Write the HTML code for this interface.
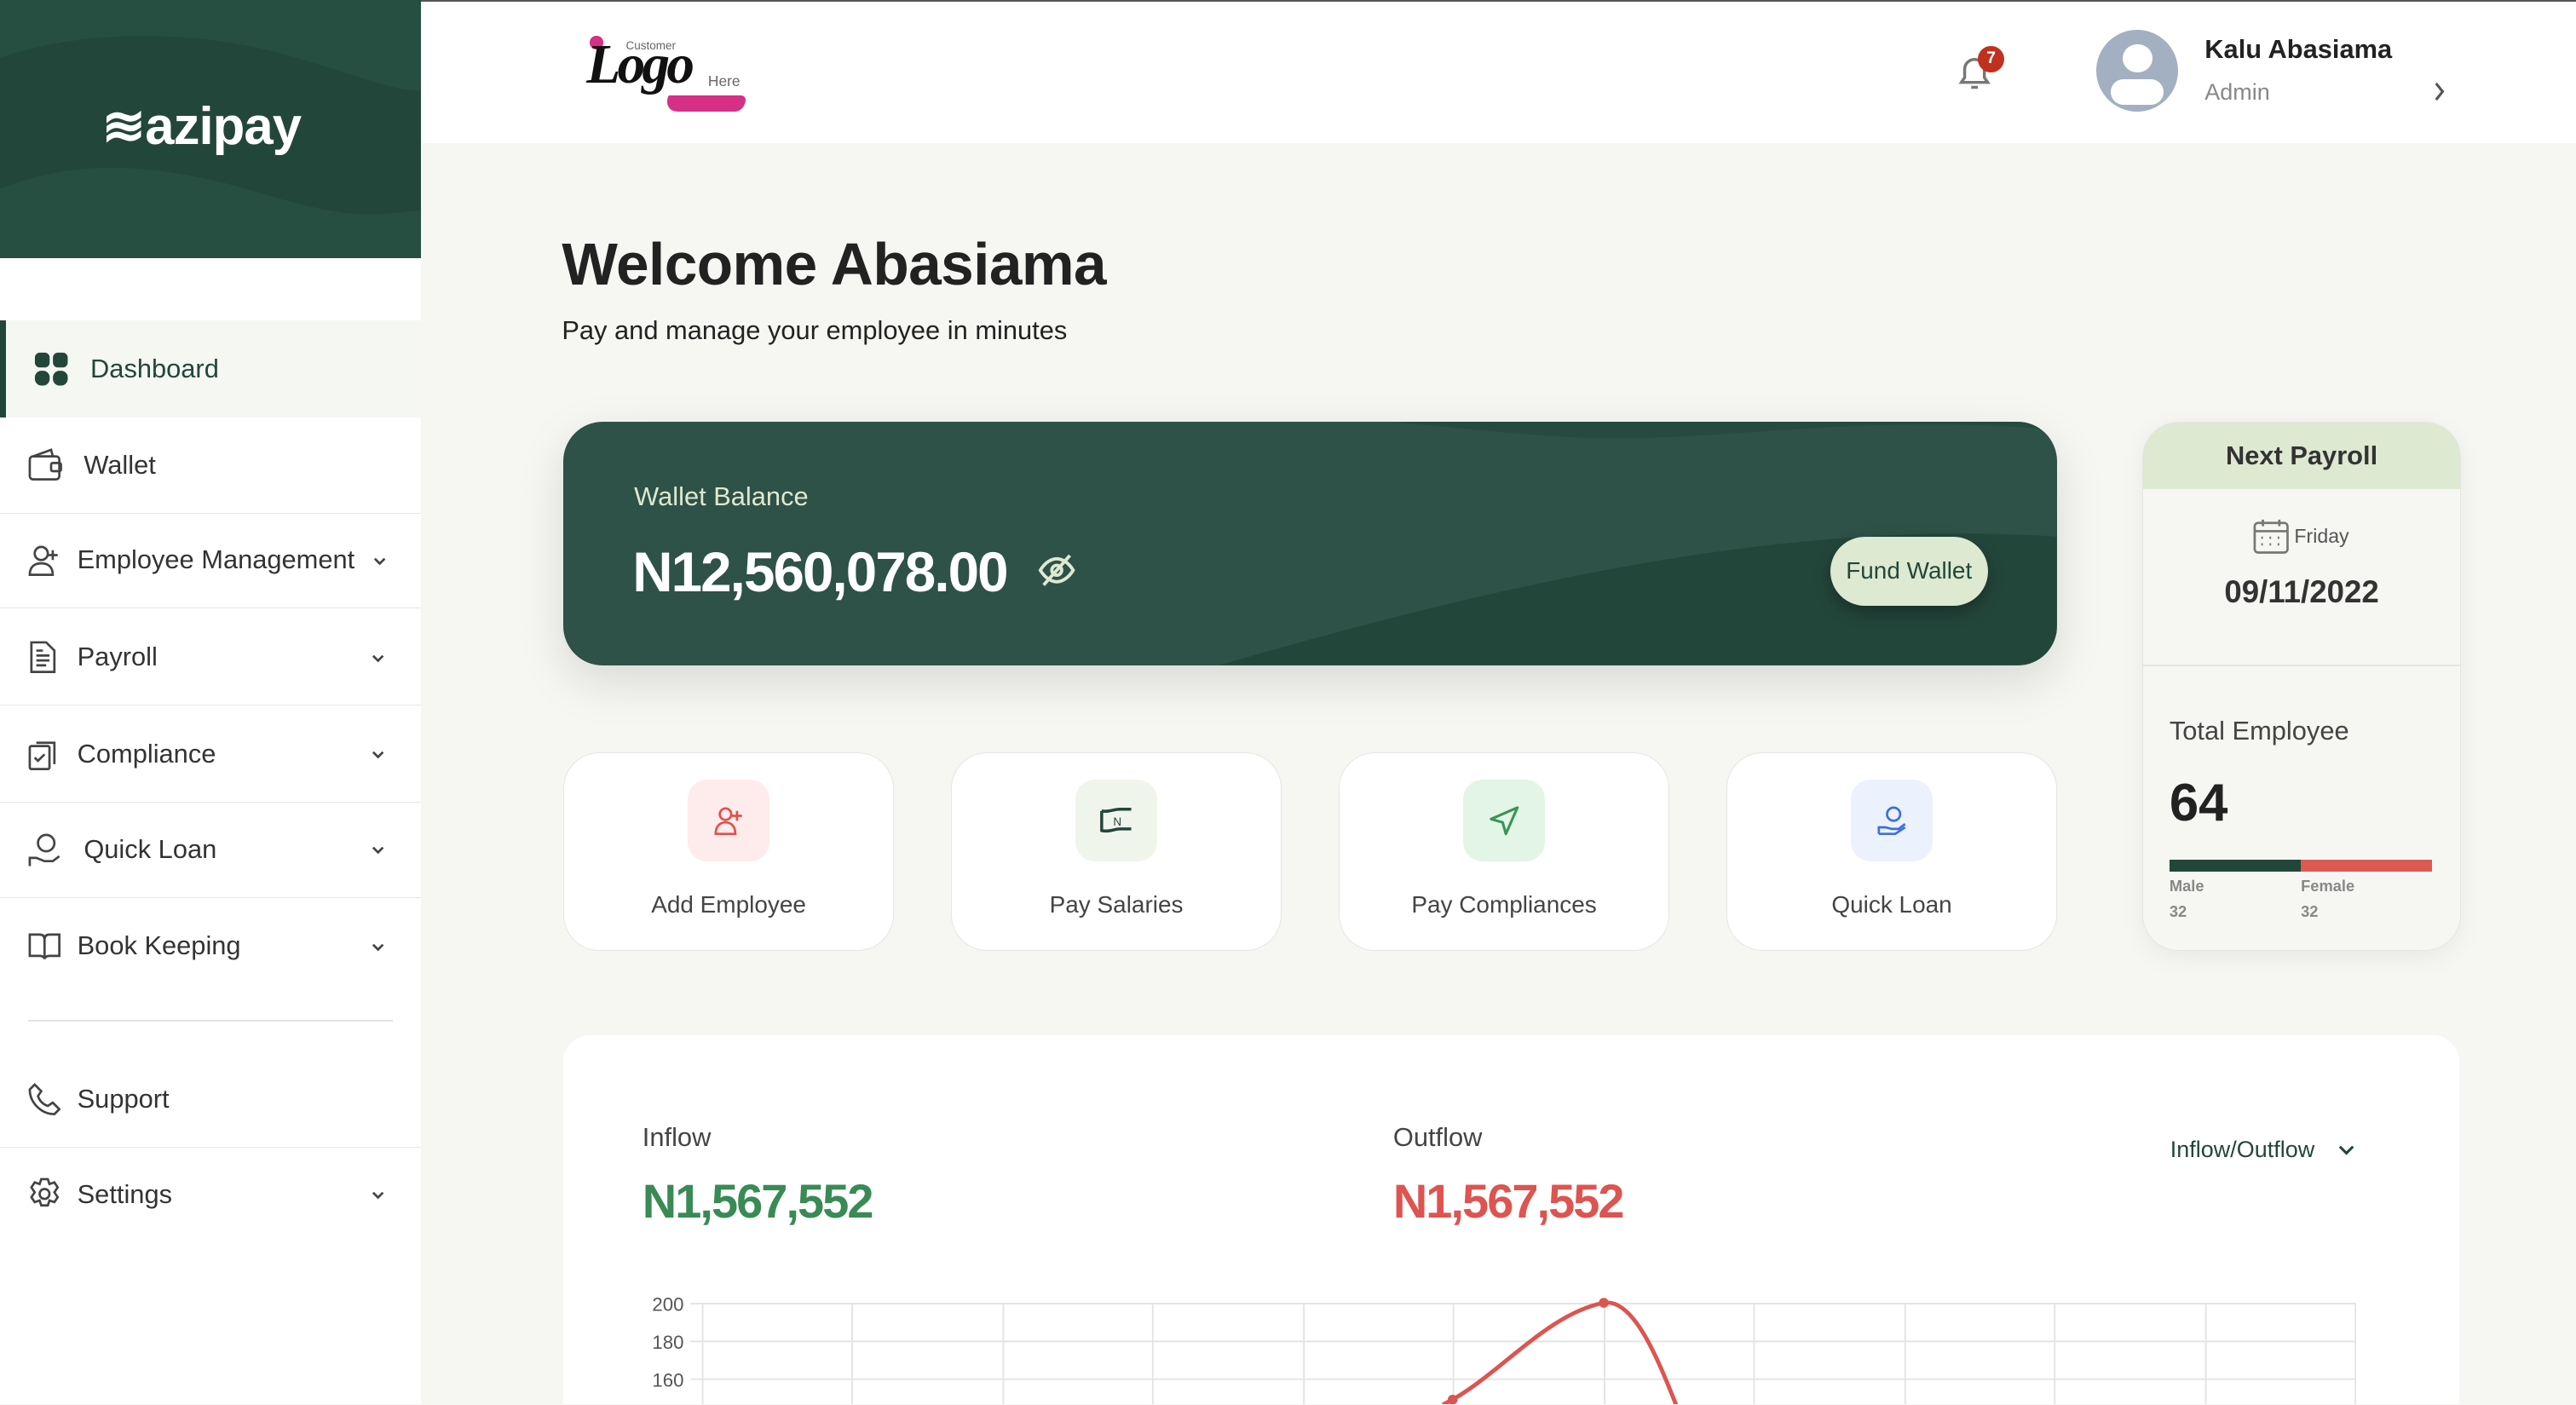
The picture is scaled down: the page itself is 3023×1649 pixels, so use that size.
<!DOCTYPE html>
<html><head><meta charset="utf-8"><style>
html,body{margin:0;padding:0;width:3023px;height:1649px;overflow:hidden;background:#f6f7f3;font-family:"Liberation Sans",sans-serif;}
#z{zoom:1.92793;width:1568px;height:855px;position:relative;overflow:hidden;}
.a{position:absolute;}
.side{left:0;top:0;width:256px;height:855px;background:#fff;}
.brand{left:0;top:0;width:256px;height:157px;background:#264f42;overflow:hidden;}
.nav{left:0;width:256px;height:58px;border-bottom:1px solid #e6e8e4;display:flex;align-items:center;font-size:16px;color:#333;}
.nav svg{position:absolute;left:17px;}
.nav span{position:absolute;left:47px;}
.nav .chev{position:absolute;left:225px;}
.card{background:#fff;border:1px solid #e4e6e2;border-radius:22px;}
.act{top:458px;width:200px;height:120px;}
.ib{position:absolute;left:75px;top:16px;width:50px;height:50px;border-radius:12px;display:flex;align-items:center;justify-content:center;}
.al{position:absolute;top:84px;width:100%;text-align:center;font-size:14.5px;color:#444;}
</style></head><body><div id="z">
<div class="a" style="left:0;top:0;width:1568px;height:1px;background:#555"></div>
<div class="a side"></div>
<div class="a brand">
<svg width="256" height="157" class="a" style="left:0;top:0"><path d="M0 35 C60 15 130 20 180 35 S240 55 256 55 V157 H0Z" fill="#23463b"/><path d="M0 115 C50 95 100 100 160 118 S230 130 256 128 V157 H0Z" fill="#264f42"/></svg>
<div class="a" style="left:62px;top:58px;color:#fff;font-size:32px;font-weight:bold;letter-spacing:-0.5px">≋azipay</div>
</div>
<div class="a" style="left:0;top:195px;width:256px;height:59px;background:#f5f7f3;border-left:4px solid #23463b;box-sizing:border-box"></div>
<div class="a nav" style="top:195px;border:none;height:59px"><svg width="22" height="22" viewBox="0 0 22 22" style="left:20px"><rect x="1" y="1" width="9" height="9" rx="3" fill="#23463b"/><rect x="12" y="1" width="9" height="9" rx="3" fill="#23463b"/><rect x="1" y="12" width="9" height="9" rx="4" fill="#23463b"/><rect x="12" y="12" width="9" height="9" rx="4" fill="#23463b"/></svg><span style="left:55px;color:#23463b">Dashboard</span></div>
<div class="a nav" style="top:254px"><svg width="22" height="20" viewBox="0 0 22 20" fill="none" stroke="#444" stroke-width="1.4"><rect x="1" y="5" width="18" height="14" rx="2"/><path d="M3 5 L14 1 L15 5"/><rect x="14" y="9" width="6" height="5" rx="1"/></svg><span style="left:51px">Wallet</span></div>
<div class="a nav" style="top:312px"><svg width="20" height="20" viewBox="0 0 20 20" fill="none" stroke="#444" stroke-width="1.4"><circle cx="8" cy="6" r="4"/><path d="M1 19c0-5 3-7 7-7s7 2 7 7z"/><path d="M15 4v6M12 7h6"/></svg><span>Employee Management</span><svg class="chev" width="10" height="10" viewBox="0 0 10 10" style="left:226px"><path d="M2 4l3 3 3-3" stroke="#444" fill="none" stroke-width="1.4"/></svg></div>
<div class="a nav" style="top:371px"><svg width="18" height="20" viewBox="0 0 18 20" fill="none" stroke="#444" stroke-width="1.4"><path d="M2 1h9l5 5v13H2z"/><path d="M5 9h8M5 12h8M5 15h6M5 6h4"/></svg><span>Payroll</span><svg class="chev" width="10" height="10" viewBox="0 0 10 10"><path d="M2 4l3 3 3-3" stroke="#444" fill="none" stroke-width="1.4"/></svg></div>
<div class="a nav" style="top:430px"><svg width="18" height="20" viewBox="0 0 18 20" fill="none" stroke="#444" stroke-width="1.4"><rect x="1" y="5" width="12" height="14" rx="1"/><path d="M5 3h11v13"/><path d="M4 12l2 2 4-4"/></svg><span>Compliance</span><svg class="chev" width="10" height="10" viewBox="0 0 10 10"><path d="M2 4l3 3 3-3" stroke="#444" fill="none" stroke-width="1.4"/></svg></div>
<div class="a nav" style="top:488px"><svg width="20" height="22" viewBox="0 0 20 22" fill="none" stroke="#444" stroke-width="1.4"><circle cx="11" cy="7" r="5"/><path d="M1 21v-5h4l5 2h5l4-3"/></svg><span style="left:51px">Quick Loan</span><svg class="chev" width="10" height="10" viewBox="0 0 10 10"><path d="M2 4l3 3 3-3" stroke="#444" fill="none" stroke-width="1.4"/></svg></div>
<div class="a nav" style="top:547px;border:none"><svg width="20" height="18" viewBox="0 0 20 18" fill="none" stroke="#444" stroke-width="1.4"><path d="M1 2h6c2 0 3 1 3 3v12c0-1-1-2-3-2H1zM19 2h-6c-2 0-3 1-3 3v12c0-1 1-2 3-2h6z"/></svg><span>Book Keeping</span><svg class="chev" width="10" height="10" viewBox="0 0 10 10"><path d="M2 4l3 3 3-3" stroke="#444" fill="none" stroke-width="1.4"/></svg></div>
<div class="a" style="left:17px;top:621px;width:222px;height:1px;background:#e3e5e1"></div>
<div class="a nav" style="top:640px"><svg width="20" height="20" viewBox="0 0 20 20" fill="none" stroke="#444" stroke-width="1.4"><path d="M4 1l4 4-2 3c1 3 3 5 6 6l3-2 4 4-3 3C8 19 1 12 1 4z"/></svg><span>Support</span></div>
<div class="a nav" style="top:698px;border:none"><svg width="20" height="20" viewBox="0 0 20 20" fill="none" stroke="#444" stroke-width="1.4"><circle cx="10" cy="10" r="3"/><path d="M8 1h4l1 3 3-1 2 3-2 3 2 3-2 3-3-1-1 3H8l-1-3-3 1-2-3 2-3-2-3 2-3 3 1z"/></svg><span>Settings</span><svg class="chev" width="10" height="10" viewBox="0 0 10 10"><path d="M2 4l3 3 3-3" stroke="#444" fill="none" stroke-width="1.4"/></svg></div>

<div class="a" style="left:256px;top:1px;width:1312px;height:86px;background:#fff"></div>
<div class="a" style="left:357px;top:20px;width:100px;height:50px">
<div class="a" style="left:2px;top:2px;width:8px;height:8px;border-radius:50%;background:#d62f86"></div>
<div class="a" style="left:48px;top:38px;width:48px;height:10px;background:#d62f86;border-radius:2px 14px 14px 30px;transform:skewX(-20deg)"></div>
<div class="a" style="left:0;top:0;font-family:'Liberation Serif',serif;font-style:italic;font-weight:bold;font-size:34px;color:#111;letter-spacing:-2px">Logo</div>
<div class="a" style="left:24px;top:4px;font-size:7px;color:#666">Customer</div>
<div class="a" style="left:74px;top:24px;font-size:9px;color:#666">Here</div>
</div>
<svg class="a" style="left:1190px;top:32px" width="26" height="24" viewBox="0 0 26 24" fill="none" stroke="#777" stroke-width="1.8"><path d="M4 18h16l-2-3v-5a6 6 0 0 0-12 0v5z"/><path d="M10 21h4"/></svg>
<div class="a" style="left:1204px;top:28px;width:16px;height:16px;border-radius:50%;background:#c0301f;color:#fff;font-size:10px;font-weight:bold;text-align:center;line-height:16px">7</div>
<div class="a" style="left:1276px;top:18px;width:50px;height:50px;border-radius:50%;background:#a3b0c2;overflow:hidden"><div class="a" style="left:16px;top:9px;width:18px;height:17px;border-radius:50%;background:#fff"></div><div class="a" style="left:9px;top:30px;width:32px;height:16px;border-radius:12px;background:#fff"></div></div>
<div class="a" style="left:1342px;top:21px;font-size:16px;font-weight:bold;color:#222">Kalu Abasiama</div>
<div class="a" style="left:1342px;top:48px;font-size:14px;color:#888">Admin</div>
<svg class="a" style="left:1480px;top:49px" width="10" height="14"><path d="M3 2l4 5-4 5" stroke="#555" fill="none" stroke-width="1.6"/></svg>

<div class="a" style="left:342px;top:140px;font-size:36px;font-weight:bold;color:#222;letter-spacing:-0.3px">Welcome Abasiama</div>
<div class="a" style="left:342px;top:192px;font-size:16px;color:#222">Pay and manage your employee in minutes</div>

<div class="a" style="left:343px;top:257px;width:909px;height:148px;border-radius:24px;background:#2e5148;overflow:hidden;box-shadow:0 10px 30px rgba(0,0,0,.12)">
<svg class="a" style="left:0;top:0" width="909" height="148"><path d="M380 0 C480 -10 560 10 640 10 S800 -5 909 5 V0Z" fill="#264a3f"/><path d="M400 148 C600 90 760 60 909 70 V148Z" fill="#23463b"/></svg>
<div class="a" style="left:43px;top:36px;font-size:16px;color:#dde9d0">Wallet Balance</div>
<div class="a" style="left:42px;top:72px;font-size:34px;font-weight:bold;color:#fff;letter-spacing:-1px">N12,560,078.00</div>
<svg class="a" style="left:288px;top:80px" width="24" height="20" viewBox="0 0 24 20" fill="none" stroke="#dde9d0" stroke-width="2"><path d="M2 10c3-5 7-7 10-7s7 2 10 7c-3 5-7 7-10 7S5 15 2 10z"/><circle cx="12" cy="10" r="3"/><path d="M4 19L20 1"/></svg>
<div class="a" style="left:771px;top:70px;width:96px;height:42px;border-radius:21px;background:#dde9d0;color:#23463b;font-size:14.5px;text-align:center;line-height:42px;box-shadow:0 4px 10px rgba(0,0,0,.3)">Fund Wallet</div>
</div>

<div class="a card act" style="left:343px"><div class="ib" style="background:#fdeceb"><svg width="20" height="20" viewBox="0 0 20 20" fill="none" stroke="#e0504a" stroke-width="1.4"><circle cx="8" cy="6" r="3.5"/><path d="M2 18c0-5 3-7 6-7s6 2 6 7z"/><path d="M15 4v6M12 7h6"/></svg></div><div class="al">Add Employee</div></div>
<div class="a card act" style="left:579px"><div class="ib" style="background:#f0f5ec"><svg width="22" height="20" viewBox="0 0 22 20" fill="none" stroke="#23463b" stroke-width="1.8"><path d="M2 4c4 1 7-1 11-1 3 0 5 0 7 0M2 4v12c4 1 8-1 11-1h7"/><text x="9" y="13" font-size="7" fill="#23463b" stroke="none" font-family="Liberation Sans">N</text></svg></div><div class="al">Pay Salaries</div></div>
<div class="a card act" style="left:815px"><div class="ib" style="background:#e3f5e6"><svg width="20" height="20" viewBox="0 0 20 20" fill="none" stroke="#3a9455" stroke-width="1.6" stroke-linejoin="round"><path d="M18 2L2 9l7 2 2 7z"/></svg></div><div class="al">Pay Compliances</div></div>
<div class="a card act" style="left:1051px"><div class="ib" style="background:#ecf2fd"><svg width="20" height="20" viewBox="0 0 20 20" fill="none" stroke="#3e6fd8" stroke-width="1.4"><circle cx="11" cy="6" r="4"/><path d="M2 18v-4h4l4 1h4l4-3M2 18h10l6-4"/></svg></div><div class="al">Quick Loan</div></div>

<div class="a" style="left:1304px;top:257px;width:193px;height:321px;border-radius:22px;border:1px solid #e4e6e2;background:#f6f7f3;overflow:hidden;box-shadow:0 4px 16px rgba(0,0,0,.06)">
<div class="a" style="left:0;top:0;width:193px;height:40px;background:#dde9d0;text-align:center;line-height:40px;font-size:16px;font-weight:bold;color:#333">Next Payroll</div>
<svg class="a" style="left:67px;top:58px" width="22" height="22" viewBox="0 0 22 22" fill="none" stroke="#777" stroke-width="1.4"><rect x="1" y="3" width="20" height="18" rx="2"/><path d="M1 8h20M6 1v4M16 1v4"/><path d="M5 12h1M10 12h1M15 12h1M5 16h1M10 16h1M15 16h1"/></svg>
<div class="a" style="left:92px;top:62px;font-size:12px;color:#555">Friday</div>
<div class="a" style="left:0;top:92px;width:193px;text-align:center;font-size:19px;font-weight:bold;color:#333">09/11/2022</div>
<div class="a" style="left:0;top:147px;width:193px;height:1px;background:#e3e5e1"></div>
<div class="a" style="left:16px;top:178px;font-size:16px;color:#444">Total Employee</div>
<div class="a" style="left:16px;top:213px;font-size:32px;font-weight:bold;color:#222">64</div>
<div class="a" style="left:16px;top:266px;width:80px;height:7px;background:#23463b"></div>
<div class="a" style="left:96px;top:266px;width:80px;height:7px;background:#dd5a52"></div>
<div class="a" style="left:16px;top:276px;font-size:9.5px;font-weight:bold;color:#888">Male</div>
<div class="a" style="left:96px;top:276px;font-size:9.5px;font-weight:bold;color:#888">Female</div>
<div class="a" style="left:16px;top:292px;font-size:9.5px;font-weight:bold;color:#888">32</div>
<div class="a" style="left:96px;top:292px;font-size:9.5px;font-weight:bold;color:#888">32</div>
</div>

<div class="a" style="left:343px;top:630px;width:1154px;height:260px;border-radius:16px;background:#fff">
<div class="a" style="left:48px;top:53px;font-size:16px;color:#444">Inflow</div>
<div class="a" style="left:48px;top:84px;font-size:29px;font-weight:bold;color:#3a8a55;letter-spacing:-1px">N1,567,552</div>
<div class="a" style="left:505px;top:53px;font-size:16px;color:#444">Outflow</div>
<div class="a" style="left:505px;top:84px;font-size:29px;font-weight:bold;color:#dd5450;letter-spacing:-1px">N1,567,552</div>
<div class="a" style="left:978px;top:62px;font-size:14px;color:#23463b">Inflow/Outflow</div>
<svg class="a" style="left:1079px;top:64px" width="12" height="12"><path d="M2 4l4 4 4-4" stroke="#23463b" fill="none" stroke-width="1.6"/></svg>
</div>
<svg class="a" style="left:380px;top:780px" width="1070" height="75">
<g stroke="#e4e4e4" stroke-width="1">
<path d="M40 13.5H1053M40 36.5H1053M40 59.5H1053"/>
<path d="M47.5 13V75M138.5 13V75M230.5 13V75M321.5 13V75M413.5 13V75M504.5 13V75M596.5 13V75M687.5 13V75M779.5 13V75M870.5 13V75M962.5 13V75M1053.5 13V75"/>
</g>
<g font-family="Liberation Sans" font-size="11.5" fill="#555" text-anchor="end"><text x="36" y="18">200</text><text x="36" y="41">180</text><text x="36" y="64">160</text></g>
<path d="M498 75 C530 60 560 20 596 13 C615 10 630 50 642 80" stroke="#dd5450" stroke-width="2.5" fill="none"/>
<circle cx="596" cy="13" r="3" fill="#dd5450"/><circle cx="504" cy="72" r="3" fill="#dd5450"/>
</svg>
</div></body></html>
